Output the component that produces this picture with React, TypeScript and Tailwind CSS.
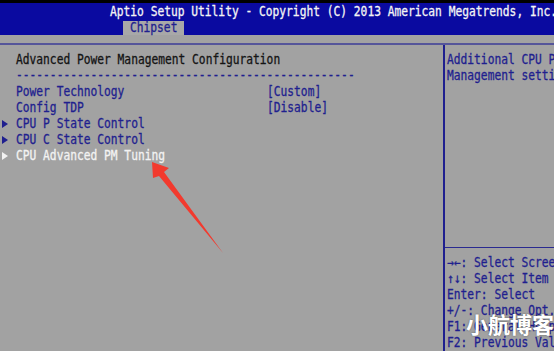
import React from "react";

const mono = "font-['DejaVu_Sans_Mono','Liberation_Mono',monospace] text-[11.25px] leading-[16px] whitespace-nowrap scale-y-[1.2] origin-center [-webkit-text-stroke:0.25px_currentColor]";

function Tri({ white }: { white?: boolean }) {
  return (
    <svg width="6" height="8" viewBox="0 0 6 8" className="ml-[2px]">
      <polygon points="0,0 6,4 0,8" fill={white ? "#f2f2f2" : "#1f1f8f"} />
    </svg>
  );
}

export default function App() {
  const rows: { label: string; value?: string; sub?: boolean; sel?: boolean }[] = [
    { label: "Power Technology", value: "[Custom]" },
    { label: "Config TDP", value: "[Disable]" },
    { label: "CPU P State Control", sub: true },
    { label: "CPU C State Control", sub: true },
    { label: "CPU Advanced PM Tuning", sub: true, sel: true },
  ];
  const help = [
    "\u2192\u2190: Select Screen",
    "\u2191\u2193: Select Item",
    "Enter: Select",
    "+/-: Change Opt.",
    "F1: General Help",
    "F2: Previous Values",
  ];
  return (
    <div className="relative w-[554px] h-[351px] overflow-hidden bg-[#a2a2a2] flex flex-col">
      <div className="h-[3px] bg-black shrink-0" />
      <div className="h-[32px] bg-[#0a0aa0] shrink-0 flex flex-col">
        <div className={`${mono} pl-[110px] pt-[1px] text-[#f4f4f4] h-[17px]`}>
          Aptio Setup Utility - Copyright (C) 2013 American Megatrends, Inc.
        </div>
        <div className="mt-[1px] ml-[123px] w-[61px] h-[14px] bg-[#a8a8a8] flex items-center pl-[7px]">
          <span className={`${mono} inline-block text-[#1f1f8f]`}>Chipset</span>
        </div>
      </div>
      <div className="h-[8px] shrink-0" />
      <div className="h-[2px] bg-[#55559a] shrink-0" />
      <div className="flex flex-1 min-h-0">
        <div className="w-[443px] shrink-0 pt-[7px]">
          <div className={`${mono} pl-[16px] text-[#141414]`}>Advanced Power Management Configuration</div>
          <div className={`${mono} pl-[16px] text-[#1f1f8f]`}>{"-".repeat(50)}</div>
          {rows.map((r) => (
            <div key={r.label} className="flex items-center h-[16px]">
              <div className="w-[16px] flex items-center">{r.sub && <Tri white={r.sel} />}</div>
              <div className={`${mono} w-[251px] ${r.sel ? "text-[#f2f2f2]" : "text-[#1f1f8f]"}`}>{r.label}</div>
              {r.value && <div className={`${mono} text-[#1f1f8f]`}>{r.value}</div>}
            </div>
          ))}
        </div>
        <div className="w-[2px] bg-[#1f1f8f] shrink-0" />
        <div className="flex-1 flex flex-col pl-[2px]">
          <div className="h-[207px] pt-[7px]">
            <div className={`${mono} text-[#1f1f8f]`}>Additional CPU Power</div>
            <div className={`${mono} text-[#1f1f8f]`}>Management settings</div>
          </div>
          <div className="h-[1px] bg-[#2a2a90] -ml-[2px]" />
          <div className="pt-[7px]">
            {help.map((h) => (
              <div key={h} className={`${mono} text-[#1f1f8f]`}>{h}</div>
            ))}
          </div>
        </div>
      </div>
      <svg className="absolute left-0 top-0 pointer-events-none" width="554" height="351">
        <polygon points="152,162 169,168 164,172 223,253 159,176 153,178" fill="#f23a2e" />
      </svg>
      <div className="absolute left-[466px] top-[309px] font-['Noto_Sans_CJK_SC',sans-serif] text-[22px] leading-[28px] font-bold text-white [text-shadow:0_0_2px_rgba(0,0,0,0.45)] whitespace-nowrap">
        小航博客
      </div>
    </div>
  );
}
